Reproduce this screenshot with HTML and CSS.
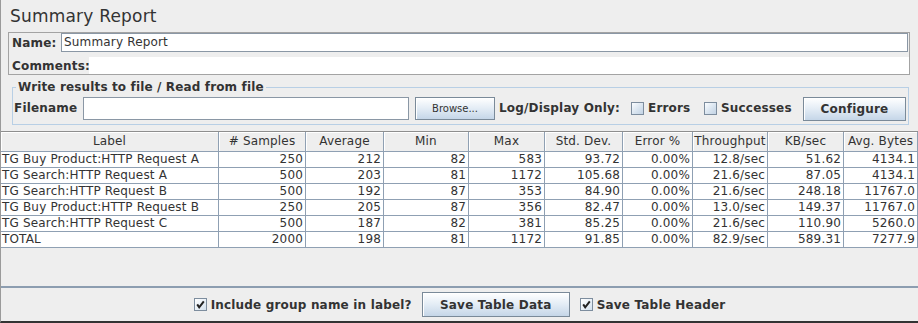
FILE: index.html
```html
<!DOCTYPE html>
<html>
<head>
<meta charset="utf-8">
<title>Summary Report</title>
<link rel="stylesheet" href="styles.css">
</head>
<body>
<div class="app">
  <div class="title">Summary Report</div>
  <div class="namebox">
    <div class="name-row"><span class="lbl name-lbl">Name:</span><div class="field name-field">Summary Report</div></div>
    <div class="comments-row"><span class="lbl comments-lbl">Comments:</span><div class="comments-area"></div></div>
  </div>
  <fieldset class="filebox">
    <legend>Write results to file / Read from file</legend>
    <div class="file-row">
      <span class="lbl filename-lbl">Filename</span>
      <div class="field file-field"></div>
      <button class="btn btn-browse">Browse...</button>
      <span class="lbl logdisplay">Log/Display Only:</span>
      <span class="check check-errors"><span class="box"></span><span class="lbl">Errors</span></span>
      <span class="check check-success"><span class="box"></span><span class="lbl">Successes</span></span>
      <button class="btn btn-configure">Configure</button>
    </div>
  </fieldset>
  <div class="pane">
    <div class="grid">
      <div class="th">Label</div><div class="th"># Samples</div><div class="th">Average</div><div class="th">Min</div><div class="th">Max</div><div class="th">Std. Dev.</div><div class="th">Error %</div><div class="th">Throughput</div><div class="th">KB/sec</div><div class="th">Avg. Bytes</div>

      <div class="td lab">TG Buy Product:HTTP Request A</div><div class="td">250</div><div class="td">212</div><div class="td">82</div><div class="td">583</div><div class="td">93.72</div><div class="td">0.00%</div><div class="td">12.8/sec</div><div class="td">51.62</div><div class="td">4134.1</div>

      <div class="td lab">TG Search:HTTP Request A</div><div class="td">500</div><div class="td">203</div><div class="td">81</div><div class="td">1172</div><div class="td">105.68</div><div class="td">0.00%</div><div class="td">21.6/sec</div><div class="td">87.05</div><div class="td">4134.1</div>

      <div class="td lab">TG Search:HTTP Request B</div><div class="td">500</div><div class="td">192</div><div class="td">87</div><div class="td">353</div><div class="td">84.90</div><div class="td">0.00%</div><div class="td">21.6/sec</div><div class="td">248.18</div><div class="td">11767.0</div>

      <div class="td lab">TG Buy Product:HTTP Request B</div><div class="td">250</div><div class="td">205</div><div class="td">87</div><div class="td">356</div><div class="td">82.47</div><div class="td">0.00%</div><div class="td">13.0/sec</div><div class="td">149.37</div><div class="td">11767.0</div>

      <div class="td lab">TG Search:HTTP Request C</div><div class="td">500</div><div class="td">187</div><div class="td">82</div><div class="td">381</div><div class="td">85.25</div><div class="td">0.00%</div><div class="td">21.6/sec</div><div class="td">110.90</div><div class="td">5260.0</div>

      <div class="td lab">TOTAL</div><div class="td">2000</div><div class="td">198</div><div class="td">81</div><div class="td">1172</div><div class="td">91.85</div><div class="td">0.00%</div><div class="td">82.9/sec</div><div class="td">589.31</div><div class="td">7277.9</div>
    </div>
  </div>
  <div class="bottom">
    <span class="check"><span class="box checked"><svg width="11" height="11" viewBox="0 0 11 11"><path d="M2.2 5.4 L4.2 8.4 L8.8 2.4" fill="none" stroke="#222" stroke-width="2"/></svg></span><span class="lbl">Include group name in label?</span></span>
    <button class="btn btn-save">Save Table Data</button>
    <span class="check"><span class="box checked"><svg width="11" height="11" viewBox="0 0 11 11"><path d="M2.2 5.4 L4.2 8.4 L8.8 2.4" fill="none" stroke="#222" stroke-width="2"/></svg></span><span class="lbl">Save Table Header</span></span>
  </div>
</div>
</body>
</html>
```

FILE: styles.css
```css
* { box-sizing: border-box; }
html, body { margin: 0; padding: 0; background: #eeeeee; }
body {
  font-family: "DejaVu Sans", "Liberation Sans", sans-serif;
  font-size: 12px;
  letter-spacing: 0.17px;
  color: #333333;
}
.app {
  width: 918px;
  height: 323px;
  border-left: 1px solid #9a9a9a;
  border-bottom: 2px solid #333333;
  display: flex;
  flex-direction: column;
  overflow: hidden;
}
.title {
  flex: 0 0 32px;
  padding: 6px 0 0 9px;
  font-size: 17px;
  letter-spacing: 0.2px;
  line-height: 21px;
}
.lbl { font-weight: bold; white-space: nowrap; letter-spacing: 0.18px; }

.namebox {
  flex: 0 0 43px;
  margin-left: 7px;
  width: 902px;
  border: 1px solid #a3a3a3;
  padding: 0 1px 0 3px;
  display: flex;
  flex-direction: column;
  gap: 5px;
}
.name-row, .comments-row { display: flex; align-items: center; }
.name-row { height: 19px; }
.comments-row { height: 17px; }
.name-lbl { width: 49px; }
.comments-lbl { width: 77px; }
.field {
  background: #ffffff;
  border: 1px solid #8a97a5;
}
.name-field {
  flex: 1;
  height: 19px;
  padding-left: 2px;
  line-height: 17px;
}
.comments-area {
  flex: 1;
  height: 17px;
  background: #ffffff;
  margin-right: -1px;
}

.filebox {
  flex: 0 0 auto;
  margin: 5px 0 0 11px;
  width: 897px;
  min-width: 0;
  border: 1px solid #b8cfe5;
  padding: 2px 0 3px 1px;
}
.filebox legend {
  font-weight: bold;
  letter-spacing: 0.14px;
  padding: 0 2px;
  margin-left: 2px;
  line-height: 15px;
}
.file-row {
  display: flex;
  align-items: flex-start;
  height: 24px;
}
.file-row .lbl { line-height: 23px; }
.filename-lbl { width: 69px; }
.file-field { width: 326px; height: 23px; }
.btn {
  font-family: inherit;
  font-size: 12px;
  font-weight: bold;
  letter-spacing: 0.2px;
  color: #333333;
  border: 1px solid #7a8a99;
  border-radius: 0;
  padding: 0;
  background: linear-gradient(#ffffff, #e3ecf5 50%, #c5d6e8);
  box-shadow: inset 1px 1px 0 #ffffff;
}
.btn-browse {
  margin-left: 6px;
  width: 80px;
  height: 23px;
  font-size: 10px;
  font-weight: normal;
  letter-spacing: 0;
}
.logdisplay { margin-left: 4px; width: 132px; }
.check { display: flex; align-items: center; }
.check-errors { width: 73px; height: 23px; }
.check-success { width: 99px; height: 23px; }
.box {
  flex: 0 0 13px;
  width: 13px;
  height: 13px;
  margin-right: 4px;
  border: 1px solid #7d8d9e;
  background: linear-gradient(135deg, #fbfdff, #d6e2ee 60%, #c3d3e4);
  display: flex;
  align-items: center;
  justify-content: center;
}
.box.checked { background: linear-gradient(135deg, #ffffff, #e6eef6 60%, #d2dfec); }
.btn-configure { width: 103px; height: 24px; }

.pane {
  flex: 1 1 auto;
  min-height: 0;
  margin-top: 6px;
  border-top: 1px solid #8e8e8e;
  border-bottom: 2px solid #8c9db0;
}
.grid {
  display: grid;
  grid-template-columns: 218px 87px 78px 85px 76px 78px 70px 75px 76px 74px;
}
.th {
  height: 20px;
  line-height: 18px;
  text-align: center;
  white-space: nowrap;
  overflow: hidden;
  background: #eeeeee;
  border-right: 1px solid #8fa0b3;
  border-bottom: 1px solid #8fa0b3;
  box-shadow: inset 1px 1px 0 #ffffff;
}
.td {
  height: 16px;
  line-height: 15px;
  background: #ffffff;
  text-align: right;
  padding-right: 2px;
  white-space: nowrap;
  overflow: hidden;
  border-right: 1px solid #8fa0b3;
  border-bottom: 1px solid #8fa0b3;
}
.td.lab { text-align: left; padding: 0 0 0 1px; }

.bottom {
  flex: 0 0 33px;
  display: flex;
  align-items: center;
  justify-content: center;
}
.btn-save { width: 148px; height: 25px; margin: 0 10px; }
```
